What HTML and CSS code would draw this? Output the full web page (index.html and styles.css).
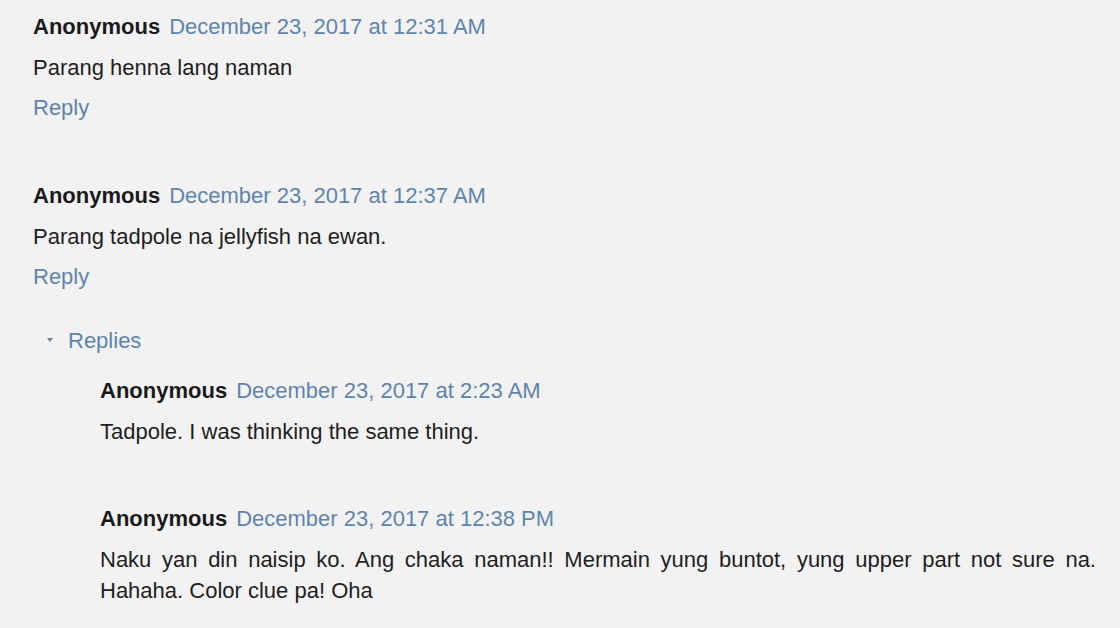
FILE: index.html
```html
<!DOCTYPE html>
<html>
<head>
<meta charset="utf-8">
<link rel="stylesheet" href="styles.css">
</head>
<body>
<div class="thread">
  <div class="comment">
    <div class="head"><span class="author">Anonymous</span><a class="date">December 23, 2017 at 12:31 AM</a></div>
    <p class="body">Parang henna lang naman</p>
    <a class="reply">Reply</a>
  </div>
  <div class="comment">
    <div class="head"><span class="author">Anonymous</span><a class="date">December 23, 2017 at 12:37 AM</a></div>
    <p class="body">Parang tadpole na jellyfish na ewan.</p>
    <a class="reply">Reply</a>
    <div class="replies">
      <div class="toggle"><span class="arrow"></span><a class="toggle-link">Replies</a></div>
      <div class="children">
        <div class="comment child">
          <div class="head"><span class="author">Anonymous</span><a class="date">December 23, 2017 at 2:23 AM</a></div>
          <p class="body">Tadpole. I was thinking the same thing.</p>
        </div>
        <div class="comment child">
          <div class="head"><span class="author">Anonymous</span><a class="date">December 23, 2017 at 12:38 PM</a></div>
          <p class="body">Naku yan din naisip ko. Ang chaka naman!! Mermain yung buntot, yung upper part not sure na. Hahaha. Color clue pa! Oha</p>
        </div>
      </div>
    </div>
  </div>
</div>
</body>
</html>
```
FILE: styles.css
```css
html, body {
  margin: 0;
  padding: 0;
  background: #f2f2f2;
}
body {
  font-family: "Liberation Sans", Arial, sans-serif;
  font-size: 22px;
  line-height: 31px;
  color: #1e1e1e;
  overflow: hidden;
}
.thread {
  padding: 11px 24px 0 33px;
}
.comment {
  display: flex;
  flex-direction: column;
  margin-bottom: 57px;
}
.comment:last-child {
  margin-bottom: 0;
}
.head {
  display: flex;
  align-items: baseline;
  gap: 9px;
}
.author {
  font-weight: bold;
  color: #1a1a1a;
}
.date, .reply, .toggle-link {
  color: #5f84ad;
  text-decoration: none;
}
.body {
  margin: 10px 0 0 0;
  text-align: justify;
}
.reply {
  margin-top: 9px;
  align-self: flex-start;
}
.replies {
  margin-top: 33px;
}
.toggle {
  display: flex;
  align-items: center;
  padding-left: 14px;
  gap: 15px;
}
.arrow {
  width: 0;
  height: 0;
  border-left: 3px solid transparent;
  border-right: 3px solid transparent;
  border-top: 4px solid #6f7f90;
  margin-top: -2px;
}
.children {
  margin-top: 19px;
  padding-left: 67px;
}
.comment.child {
  margin-bottom: 56px;
}
.comment.child:last-child {
  margin-bottom: 0;
}
```
